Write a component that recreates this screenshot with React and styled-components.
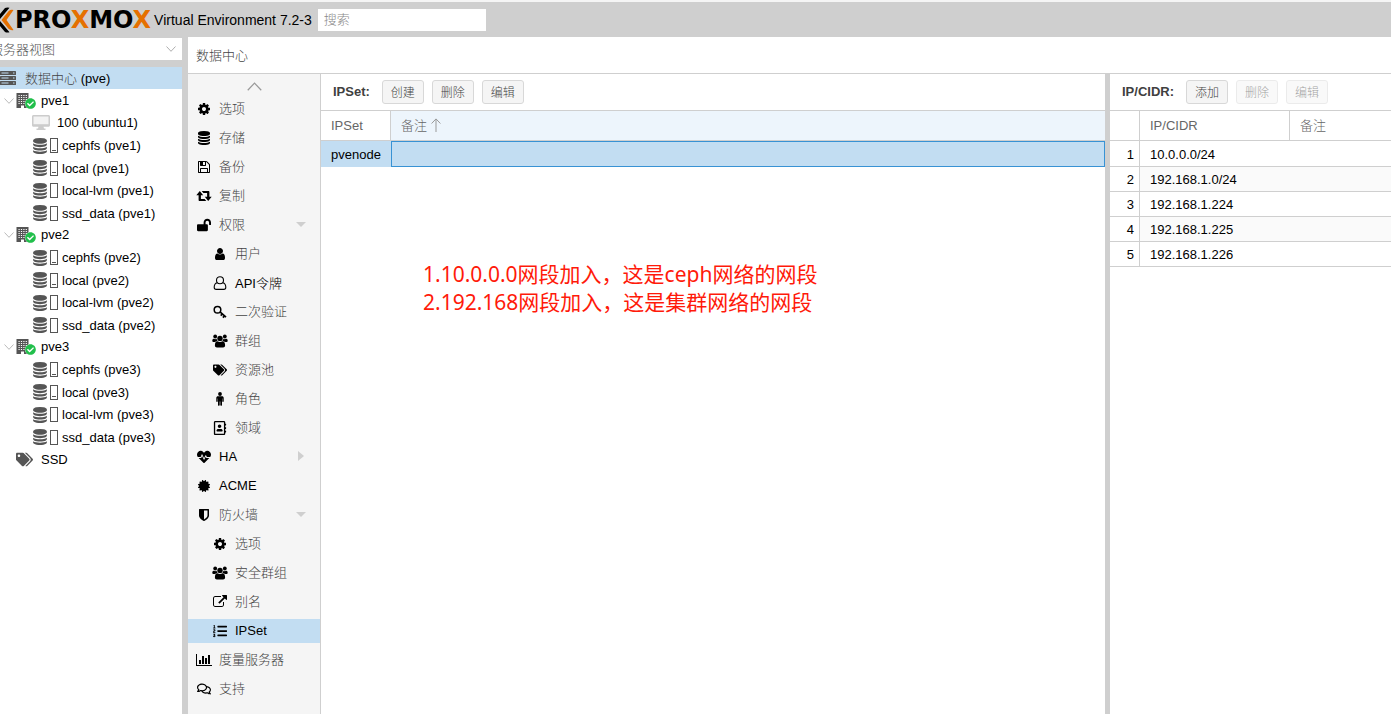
import React, { useState } from "react";
import styled, { createGlobalStyle } from "styled-components";
import {
  FaCertificate,
  FaCheckCircle,
  FaHeartbeat,
  FaListOl,
  FaLockOpen,
  FaRegAddressBook,
  FaRegComments,
  FaTags,
} from "react-icons/fa";

const DatabaseIcon = () => (
  <svg viewBox="0 0 1792 1792" width="1em" height="1em" fill="currentColor">
    <path d="M896 768q237 0 443-43t325-127v170q0 69-103 128t-280 93.500-385 34.500-385-34.500-280-93.500-103-128v-170q119 84 325 127t443 43zm0 768q237 0 443-43t325-127v170q0 69-103 128t-280 93.500-385 34.500-385-34.500-280-93.500-103-128v-170q119 84 325 127t443 43zm0-384q237 0 443-43t325-127v170q0 69-103 128t-280 93.500-385 34.500-385-34.500-280-93.500-103-128v-170q119 84 325 127t443 43zm0-1152q208 0 385 34.500t280 93.500 103 128v128q0 69-103 128t-280 93.500-385 34.500-385-34.500-280-93.500-103-128v-128q0-69 103-128t280-93.500 385-34.500z" />
  </svg>
);

const CogIcon = () => (
  <svg viewBox="0 0 1792 1792" width="1em" height="1em" fill="currentColor">
    <path d="M1152 896q0-106-75-181t-181-75-181 75-75 181 75 181 181 75 181-75 75-181zm512-109v222q0 12-8 23t-20 13l-185 28q-19 54-39 91 35 50 107 138 10 12 10 25t-9 23q-27 37-99 108t-94 71q-12 0-26-9l-138-108q-44 23-91 38-16 136-29 186-7 28-36 28h-222q-14 0-24.500-8.500t-11.500-21.500l-28-184q-49-16-90-37l-141 107q-10 9-25 9-14 0-25-11-126-114-165-168-7-10-7-23 0-12 8-23 15-21 51-66.500t54-70.500q-27-50-41-99l-183-27q-13-2-21-12.500t-8-23.500v-222q0-12 8-23t19-13l186-28q14-46 39-92-40-57-107-138-10-12-10-24 0-10 9-23 26-36 98.500-107.500t94.500-71.500q13 0 26 10l138 107q44-23 91-38 16-136 29-186 7-28 36-28h222q14 0 24.500 8.500t11.500 21.500l28 184q49 16 90 37l142-107q9-9 24-9 13 0 25 10 129 119 165 170 7 8 7 22 0 12-8 23-15 21-51 66.500t-54 70.500q26 50 41 98l183 28q13 2 21 12.500t8 23.500z" />
  </svg>
);

const FloppyIcon = () => (
  <svg viewBox="0 0 1792 1792" width="1em" height="1em" fill="currentColor">
    <path d="M512 1536h768v-384h-768v384zm896 0h128v-896q0-14-10-38.500t-20-34.500l-281-281q-10-10-34-20t-39-10v416q0 40-28 68t-68 28h-576q-40 0-68-28t-28-68v-416h-128v1280h128v-416q0-40 28-68t68-28h832q40 0 68 28t28 68v416zm-384-928v-320q0-13-9.500-22.500t-22.500-9.500h-192q-13 0-22.500 9.500t-9.500 22.500v320q0 13 9.500 22.500t22.500 9.500h192q13 0 22.500-9.500t9.500-22.500zm640 32v928q0 40-28 68t-68 28h-1344q-40 0-68-28t-28-68v-1344q0-40 28-68t68-28h928q40 0 88 20t76 48l280 280q28 28 48 76t20 88z" />
  </svg>
);

const RetweetIcon = () => (
  <svg viewBox="0 0 16 14" width="16" height="14" fill="currentColor">
    <path d="M3.800 2L.3 6.300h2.300V11c0 .6.400 1 1 1h6.700L8.600 9.900H4.900V6.300h2.300zM12.200 12l3.500-4.300h-2.300V3c0-.6-.4-1-1-1H5.700l1.700 2.100h3.700v3.600H8.800z" />
  </svg>
);

const UserIcon = () => (
  <svg viewBox="0 0 1792 1792" width="1em" height="1em" fill="currentColor">
    <path d="M1536 1399q0 109-62.500 187t-150.500 78h-854q-88 0-150.500-78t-62.500-187q0-85 8.500-160.500t31.500-152 58.500-131 94-89 134.500-34.500q131 128 313 128t313-128q76 0 134.500 34.500t94 89 58.500 131 31.500 152 8.500 160.500zm-256-887q0 159-112.500 271.500t-271.500 112.500-271.500-112.500-112.500-271.500 112.500-271.500 271.500-112.500 271.500 112.500 112.500 271.500z" />
  </svg>
);

const UserOutlineIcon = () => (
  <svg
    viewBox="0 0 14 14"
    width="1em"
    height="1em"
    fill="none"
    stroke="currentColor"
    strokeWidth="1.1"
  >
    <circle cx="7" cy="4.200" r="3.500" />
    <path d="M4.200 6.700C2 7.200 1.200 9 1.200 11.300c0 1.300.8 2.100 2 2.100h7.600c1.200 0 2-.8 2-2.100 0-2.300-.8-4.100-3-4.600" />
  </svg>
);

const KeyIcon = () => (
  <svg
    viewBox="0 0 14 14"
    width="1em"
    height="1em"
    fill="none"
    stroke="currentColor"
  >
    <circle cx="4.500" cy="4.700" r="3.300" strokeWidth="1.500" />
    <path d="M7 6.800l6 5.400M9.300 9l-1.600 1.700M11.400 10.900l-1.500 1.700" strokeWidth="1.700" />
  </svg>
);

const UsersIcon = () => (
  <svg viewBox="0 0 16 14" width="16" height="14" fill="currentColor">
    <circle cx="3.200" cy="2.500" r="1.900" />
    <circle cx="12.800" cy="2.500" r="1.900" />
    <circle cx="8" cy="4.400" r="2.700" />
    <path d="M1.600 4.700c1 .6 2.100.6 3 .1.100 1 .5 1.800 1.100 2.300-1 0-1.800.2-2.500.9H1.700C.8 8 .3 7.600.3 6.800c0-.9.300-2 1.300-2.100zM14.400 4.700c-1 .6-2.100.6-3 .1-.1 1-.5 1.800-1.100 2.300 1 0 1.800.2 2.500.9h1.500c.9 0 1.400-.4 1.400-1.200 0-.9-.3-2-1.300-2.100z" />
    <path d="M5.400 7.300c1.600 1 3.600 1 5.200 0 1.800.1 2.500 1.800 2.500 4.200 0 1.300-.8 2-2 2H4.900c-1.200 0-2-.7-2-2 0-2.400.7-4.100 2.500-4.200z" />
  </svg>
);

const MaleIcon = () => (
  <svg viewBox="0 0 14 14" width="14" height="14" fill="currentColor">
    <circle cx="7" cy="2" r="1.900" />
    <path d="M5 4.200h4c1 0 1.700.7 1.700 1.700v3.300c0 1-1.400 1-1.400 0V6.500H9v6.600c0 1.100-1.700 1.100-1.700 0V9.600h-.6v3.500c0 1.100-1.700 1.100-1.700 0V6.500h-.3v2.700c0 1-1.400 1-1.400 0V5.900c0-1 .7-1.700 1.700-1.700z" />
  </svg>
);

const ShieldIcon = () => (
  <svg viewBox="0 0 1792 1792" width="1em" height="1em" fill="currentColor">
    <path d="M1344 960v-640h-448v1137q119-63 213-137 235-184 235-360zm192-768v768q0 86-33.500 170.500t-83 150-118 127.500-126.500 103-121 77.500-89.500 49.500-42.500 20q-12 6-26 6t-26-6q-16-7-42.500-20t-89.500-49.500-121-77.500-126.500-103-118-127.500-83-150-33.500-170.500v-768q0-26 19-45t45-19h1152q26 0 45 19t19 45z" />
  </svg>
);

const ExternalIcon = () => (
  <svg viewBox="0 0 1792 1792" width="1em" height="1em" fill="currentColor">
    <path d="M1408 928v320q0 119-84.500 203.500t-203.500 84.500h-832q-119 0-203.500-84.500t-84.500-203.500v-832q0-119 84.500-203.500t203.500-84.500h704q14 0 23 9t9 23v64q0 14-9 23t-23 9h-704q-66 0-113 47t-47 113v832q0 66 47 113t113 47h832q66 0 113-47t47-113v-320q0-14 9-23t23-9h64q14 0 23 9t9 23zm384-864v512q0 26-19 45t-45 19-45-19l-176-176-652 652q-10 10-23 10t-23-10l-114-114q-10-10-10-23t10-23l652-652-176-176q-19-19-19-45t19-45 45-19h512q26 0 45 19t19 45z" />
  </svg>
);

const BarChartIcon = () => (
  <svg viewBox="0 0 2048 1792" width="16" height="14" fill="currentColor">
    <path d="M640 896v512h-256v-512h256zm384-512v1024h-256v-1024h256zm1024 1152v128h-2048v-1536h128v1408h1920zm-640-896v768h-256v-768h256zm384-384v1152h-256v-1152h256z" />
  </svg>
);

const ServerIcon = () => (
  <svg viewBox="0 0 16 14" width="16" height="14">
    {[0, 5, 10].map((y) => (
      <g key={y}>
        <rect y={y} width="16" height="4" rx=".6" fill="#555" />
        <path d={`M1.500 ${y + 2}h7M13 ${y + 2}h1.500`} stroke="#c2ddf2" strokeWidth="1" />
      </g>
    ))}
  </svg>
);

const BuildingIcon = () => (
  <svg viewBox="0 0 13 15" width="13" height="15">
    <path d="M.5 0h12v15H8v-2.500H5V15H.5z" fill="#555" />
    {[2, 4, 6, 8, 10].map((y) => (
      <path
        key={y}
        d={`M2.500 ${y + 0.5}h8.500`}
        stroke="#fff"
        strokeWidth="1"
        strokeDasharray="1.200 1.200"
      />
    ))}
  </svg>
);

const DesktopIcon = () => (
  <svg viewBox="0 0 18 15" width="18" height="15" fill="#ccc">
    <path d="M1.500 0h15c.8 0 1.500.7 1.500 1.500v8.800c0 .8-.7 1.500-1.500 1.500h-5l.5 1.700h1.500V15h-9v-1.500H6l.5-1.700h-5C.7 11.800 0 11.100 0 10.300V1.500C0 .7.7 0 1.500 0z" />
    <path d="M1.500 1.500h15v7.700h-15z" fill="#f3f3f3" />
  </svg>
);

const Chevron = ({ up, width = 10, height = 6, color = "#999" }) => (
  <svg viewBox="0 0 10 6" width={width} height={height} fill="none">
    <path
      d={up ? "M.5 5.500L5 .7l4.500 4.800" : "M.5 .5L5 5.300L9.500 .5"}
      stroke={color}
      strokeWidth=".8"
    />
  </svg>
);

const SortArrow = () => (
  <svg viewBox="0 0 10 14" width="10" height="14" fill="none" stroke="#999">
    <path d="M5 14V1M.6 5.500L5 .9l4.400 4.600" />
  </svg>
);

const LogoMark = () => (
  <svg viewBox="0 0 28 26" width="28" height="26">
    <path
      fill="#000"
      d="M5 0.800Q7 0 9 1l5 6 5-6q2-1 4.500-.2L14 12zM5 25.200q2 .8 4-.2l5-6 5 6q2 1 4.500.2L14 14z"
    />
    <path
      fill="#e57000"
      d="M27.500 3q-3-.7-5 1.200L15.500 13l7 8.800q2 1.900 5 1.200L20.500 13zM.5 3q3-.7 5 1.200l7 8.800-7 8.800Q3.500 23.700.5 23l7-10z"
    />
  </svg>
);

const storages = (node) => [
  { name: `cephfs (${node})`, used: 1 },
  { name: `local (${node})`, used: 2 },
  { name: `local-lvm (${node})`, used: 0 },
  { name: `ssd_data (${node})`, used: 0 },
];

const nodes = [
  { name: "pve1", guests: ["100 (ubuntu1)"], storages: storages("pve1") },
  { name: "pve2", guests: [], storages: storages("pve2") },
  { name: "pve3", guests: [], storages: storages("pve3") },
];

const menu = [
  { id: "options", label: "选项", icon: <CogIcon /> },
  { id: "storage", label: "存储", icon: <DatabaseIcon /> },
  { id: "backup", label: "备份", icon: <FloppyIcon /> },
  { id: "replication", label: "复制", icon: <RetweetIcon /> },
  { id: "permissions", label: "权限", icon: <FaLockOpen />, toggle: "open" },
  { id: "users", label: "用户", icon: <UserIcon />, sub: true },
  { id: "tokens", label: "API令牌", icon: <UserOutlineIcon />, sub: true },
  { id: "tfa", label: "二次验证", icon: <KeyIcon />, sub: true },
  { id: "groups", label: "群组", icon: <UsersIcon />, sub: true },
  { id: "pools", label: "资源池", icon: <FaTags />, sub: true },
  { id: "roles", label: "角色", icon: <MaleIcon />, sub: true },
  { id: "realms", label: "领域", icon: <FaRegAddressBook />, sub: true },
  { id: "ha", label: "HA", icon: <FaHeartbeat />, toggle: "closed" },
  { id: "acme", label: "ACME", icon: <FaCertificate size={12} /> },
  { id: "firewall", label: "防火墙", icon: <ShieldIcon />, toggle: "open" },
  { id: "fw-options", label: "选项", icon: <CogIcon />, sub: true },
  { id: "fw-groups", label: "安全群组", icon: <UsersIcon />, sub: true },
  { id: "fw-alias", label: "别名", icon: <ExternalIcon />, sub: true },
  { id: "fw-ipset", label: "IPSet", icon: <FaListOl />, sub: true },
  { id: "metrics", label: "度量服务器", icon: <BarChartIcon /> },
  { id: "support", label: "支持", icon: <FaRegComments /> },
];

const cidrs = [
  "10.0.0.0/24",
  "192.168.1.0/24",
  "192.168.1.224",
  "192.168.1.225",
  "192.168.1.226",
];

const isLatin = (text) => /^[a-z]/i.test(text);

const App = () => {
  const [active, setActive] = useState("fw-ipset");

  return (
    <>
      <GlobalStyle />
      <Shell>
        <Header>
          <LogoMark />
          <Wordmark>
            PRO<em>X</em>MO<em>X</em>
          </Wordmark>
          <Version>Virtual Environment 7.2-3</Version>
          <Search type="text" placeholder="搜索" aria-label="搜索" />
        </Header>
        <Body>
          <Sidebar>
            <ViewPicker>
              <ViewSelect aria-label="视图" defaultValue="server">
                <option value="server">服务器视图</option>
              </ViewSelect>
              <Chevron />
            </ViewPicker>
            <Tree>
              <RootRow>
                <ServerIcon />
                <RootLabel>
                  <Muted>数据中心</Muted> (pve)
                </RootLabel>
              </RootRow>
              {nodes.map((node) => (
                <React.Fragment key={node.name}>
                  <NodeRow>
                    <Chevron color="#aaa" />
                    <NodeIcon>
                      <BuildingIcon />
                      <Online>
                        <FaCheckCircle size={11} />
                      </Online>
                    </NodeIcon>
                    {node.name}
                  </NodeRow>
                  {node.guests.map((guest) => (
                    <GuestRow key={guest}>
                      <DesktopIcon />
                      {guest}
                    </GuestRow>
                  ))}
                  <div>
                    {node.storages.map((storage) => (
                      <StorageRow key={storage.name}>
                        <DatabaseIcon />
                        <Usage $used={storage.used} />
                        {storage.name}
                      </StorageRow>
                    ))}
                  </div>
                </React.Fragment>
              ))}
              <PoolRow>
                <FaTags size={17} />
                SSD
              </PoolRow>
            </Tree>
          </Sidebar>
          <Content>
            <Title>数据中心</Title>
            <Panels>
              <Menu>
                <ScrollUp type="button" aria-label="向上滚动">
                  <Chevron up width={15} height={9} />
                </ScrollUp>
                {menu.map((item) => (
                  <MenuItem
                    key={item.id}
                    type="button"
                    $sub={item.sub}
                    $active={item.id === active}
                    onClick={() => setActive(item.id)}
                  >
                    <MenuIcon>{item.icon}</MenuIcon>
                    <MenuLabel $muted={!isLatin(item.label)}>
                      {item.label}
                    </MenuLabel>
                    {item.toggle && <Toggle $open={item.toggle === "open"} />}
                  </MenuItem>
                ))}
              </Menu>
              <SetPanel>
                <Toolbar>
                  <ToolbarLabel>IPSet:</ToolbarLabel>
                  <Button type="button">创建</Button>
                  <Button type="button">删除</Button>
                  <Button type="button">编辑</Button>
                </Toolbar>
                <Grid>
                  <colgroup>
                    <col width="70" />
                    <col />
                  </colgroup>
                  <thead>
                    <tr>
                      <HeadCell>IPSet</HeadCell>
                      <HeadCell $sorted>
                        <SortLabel>
                          备注
                          <SortArrow />
                        </SortLabel>
                      </HeadCell>
                    </tr>
                  </thead>
                  <tbody>
                    <SelectedRow>
                      <Cell>pvenode</Cell>
                      <FocusCell />
                    </SelectedRow>
                  </tbody>
                </Grid>
                <Note>
                  1.10.0.0.0网段加入，这是ceph网络的网段
                  <br />
                  2.192.168网段加入，这是集群网络的网段
                </Note>
              </SetPanel>
              <CidrPanel>
                <Toolbar>
                  <ToolbarLabel>IP/CIDR:</ToolbarLabel>
                  <Button type="button">添加</Button>
                  <Button type="button" disabled>
                    删除
                  </Button>
                  <Button type="button" disabled>
                    编辑
                  </Button>
                </Toolbar>
                <Grid>
                  <colgroup>
                    <col width="30" />
                    <col width="150" />
                    <col />
                  </colgroup>
                  <thead>
                    <tr>
                      <HeadCell aria-label="#" />
                      <HeadCell>IP/CIDR</HeadCell>
                      <HeadCell>
                        <SortLabel>备注</SortLabel>
                      </HeadCell>
                    </tr>
                  </thead>
                  <tbody>
                    {cidrs.map((cidr, index) => (
                      <CidrRow key={cidr}>
                        <NumberCell>{index + 1}</NumberCell>
                        <Cell>{cidr}</Cell>
                        <Cell />
                      </CidrRow>
                    ))}
                  </tbody>
                </Grid>
              </CidrPanel>
            </Panels>
          </Content>
        </Body>
      </Shell>
    </>
  );
};

const GlobalStyle = createGlobalStyle`
  * {
    box-sizing: border-box;
  }
  body {
    margin: 0;
    overflow: hidden;
    background-color: #fff;
  }
  body, button, input, select {
    font-family: "Liberation Sans", "Noto Sans CJK SC", sans-serif;
    font-size: 13px;
    font-weight: 300;
    color: #000;
  }
  svg {
    flex-shrink: 0;
  }
`;

const Shell = styled.div`
  display: flex;
  flex-direction: column;
  height: 100vh;
  margin-left: -14px;
  border-top: 2px solid #f5f5f5;
  background-color: #cfcfcf;
`;

const Header = styled.header`
  display: flex;
  align-items: center;
  height: 35px;
`;

const Wordmark = styled.span`
  margin-left: 1px;
  font-family: "DejaVu Sans", sans-serif;
  font-size: 24px;
  font-weight: 700;
  line-height: 28px;
  em {
    font-style: normal;
    color: #e57000;
  }
`;

const Version = styled.span`
  margin-left: 3px;
  font-size: 14px;
`;

const Search = styled.input`
  width: 168px;
  height: 22px;
  margin-left: 6px;
  padding: 0 6px;
  border: none;
  background-color: #fff;
  &::placeholder {
    color: #888;
  }
`;

const Body = styled.div`
  display: flex;
  flex: 1;
  gap: 6px;
  min-height: 0;
`;

const Sidebar = styled.aside`
  display: flex;
  flex-direction: column;
  flex: 0 0 196px;
`;

const ViewPicker = styled.div`
  display: flex;
  align-items: center;
  height: 22px;
  margin: 1px 0 7px;
  padding: 0 6px 0 4px;
  background-color: #fff;
`;

const ViewSelect = styled.select`
  flex: 1;
  height: 22px;
  padding: 0;
  border: none;
  background: none;
  appearance: none;
  color: #555;
`;

const Tree = styled.div`
  flex: 1;
  background-color: #fff;
`;

const TreeRow = styled.div`
  display: flex;
  align-items: center;
  height: 22px;
  white-space: nowrap;
  svg {
    color: #555;
  }
`;

const RootRow = styled(TreeRow)`
  gap: 9px;
  padding-left: 14px;
  background-color: #c2ddf2;
`;

const RootLabel = styled.span`
  padding-bottom: 2px;
`;

const Muted = styled.span`
  color: #444;
`;

const NodeRow = styled(TreeRow)`
  gap: 2px;
  padding: 1px 0 0 18px;
`;

const NodeIcon = styled.span`
  position: relative;
  display: flex;
  width: 23px;
`;

const Online = styled.span`
  position: absolute;
  right: 3px;
  bottom: -1px;
  display: flex;
  border-radius: 50%;
  background-color: #fff;
  svg {
    color: #21bf4b;
  }
`;

const GuestRow = styled(TreeRow)`
  gap: 7px;
  padding: 1px 0 0 46px;
`;

const StorageRow = styled(TreeRow)`
  height: 23px;
  padding: 2px 0 0 46px;
  svg {
    width: 16px;
    height: 16px;
  }
  &:nth-child(even) {
    height: 22px;
  }
`;

const Usage = styled.span`
  width: 8px;
  height: 15px;
  margin: 0 4px 0 2px;
  border: 1px solid #555;
  background-image: linear-gradient(#555, #555);
  background-repeat: no-repeat;
  background-size: 4px ${({ $used }) => ($used ? "1px" : "0")};
  background-position: center bottom ${({ $used }) => ($used > 1 ? "2px" : "1px")};
`;

const PoolRow = styled(TreeRow)`
  gap: 8px;
  padding: 2px 0 0 30px;
`;

const Content = styled.main`
  display: flex;
  flex: 1;
  flex-direction: column;
  min-width: 0;
  background-color: #fff;
`;

const Title = styled.div`
  height: 37px;
  padding-left: 8px;
  border-bottom: 1px solid #cfcfcf;
  line-height: 37px;
  color: #444;
`;

const Panels = styled.div`
  display: flex;
  flex: 1;
  min-height: 0;
`;

const Menu = styled.nav`
  display: flex;
  flex: 0 0 133px;
  flex-direction: column;
  gap: 5px;
  overflow: hidden;
  border-right: 1px solid #cfcfcf;
  background-color: #f5f5f5;
`;

const ScrollUp = styled.button`
  display: flex;
  flex-shrink: 0;
  align-items: center;
  justify-content: center;
  height: 18px;
  padding: 6px 0 0;
  border: none;
  background: none;
`;

const MenuItem = styled.button`
  display: flex;
  flex-shrink: 0;
  align-items: center;
  height: 24px;
  padding: 0 14px 0 ${({ $sub }) => ($sub ? "24px" : "8px")};
  border: none;
  background-color: ${({ $active }) => ($active ? "#c2ddf2" : "transparent")};
  text-align: left;
  cursor: pointer;
`;

const MenuIcon = styled.span`
  display: flex;
  justify-content: center;
  width: 16px;
  margin-right: 7px;
  font-size: 14px;
`;

const MenuLabel = styled.span`
  flex: 1;
  padding-bottom: ${({ $muted }) => ($muted ? "4px" : "2px")};
  color: ${({ $muted }) => ($muted ? "#444" : "#000")};
`;

const Toggle = styled.span`
  margin-bottom: 2px;
  border: 5px solid transparent;
  ${({ $open }) =>
    $open
      ? "border-top-color: #cfcfcf; border-bottom-width: 0;"
      : "border-left: 6px solid #cfcfcf; border-right-width: 0; margin-right: 2px;"}
`;

const SetPanel = styled.section`
  flex: 1;
  min-width: 0;
`;

const CidrPanel = styled.section`
  flex: 0 0 286px;
  border-left: 5px solid #cfcfcf;
`;

const Toolbar = styled.div`
  display: flex;
  align-items: center;
  gap: 8px;
  height: 37px;
  padding-left: 12px;
  border-bottom: 1px solid #cfcfcf;
`;

const ToolbarLabel = styled.span`
  margin-right: 4px;
  padding-bottom: 2px;
  font-weight: 700;
  color: #404040;
`;

const Button = styled.button`
  width: 42px;
  height: 24px;
  padding: 0 0 2px;
  border: 1px solid #d8d8d8;
  border-radius: 3px;
  background-color: #f5f5f5;
  font-size: 12px;
  color: #444;
  &:disabled {
    opacity: 0.5;
  }
`;

const Grid = styled.table`
  width: 100%;
  table-layout: fixed;
  border-collapse: separate;
  border-spacing: 0;
`;

const HeadCell = styled.th`
  height: 30px;
  padding: 0 10px;
  border-bottom: 1px solid #cfcfcf;
  background-color: ${({ $sorted }) => ($sorted ? "#edf5fc" : "#fff")};
  font-weight: 300;
  text-align: left;
  color: #666;
  &:not(:last-child) {
    border-right: 1px solid #cfcfcf;
  }
`;

const SortLabel = styled.span`
  display: flex;
  align-items: center;
  gap: 4px;
  padding-bottom: 2px;
`;

const Cell = styled.td`
  padding: 0 10px;
  white-space: nowrap;
`;

const SelectedRow = styled.tr`
  height: 26px;
  background-color: #c2ddf2;
`;

const FocusCell = styled(Cell)`
  border: 1px solid #3892d4;
`;

const NumberCell = styled.td`
  padding: 0 5px;
  border-right: 1px solid #cfcfcf;
  text-align: right;
`;

const CidrRow = styled.tr`
  height: 25px;
  td {
    border-bottom: 1px solid #cfcfcf;
  }
  &:first-child {
    height: 26px;
  }
  &:first-child td {
    padding-top: 1px;
  }
  &:nth-child(even) td:not(:first-child) {
    background-color: #fafafa;
  }
`;

const Note = styled.p`
  margin: 93px 0 0 102px;
  font-family: "Noto Sans", "Noto Sans CJK SC", sans-serif;
  font-size: 21px;
  font-weight: 400;
  line-height: 28px;
  color: #ff1a0a;
`;

export default App;
